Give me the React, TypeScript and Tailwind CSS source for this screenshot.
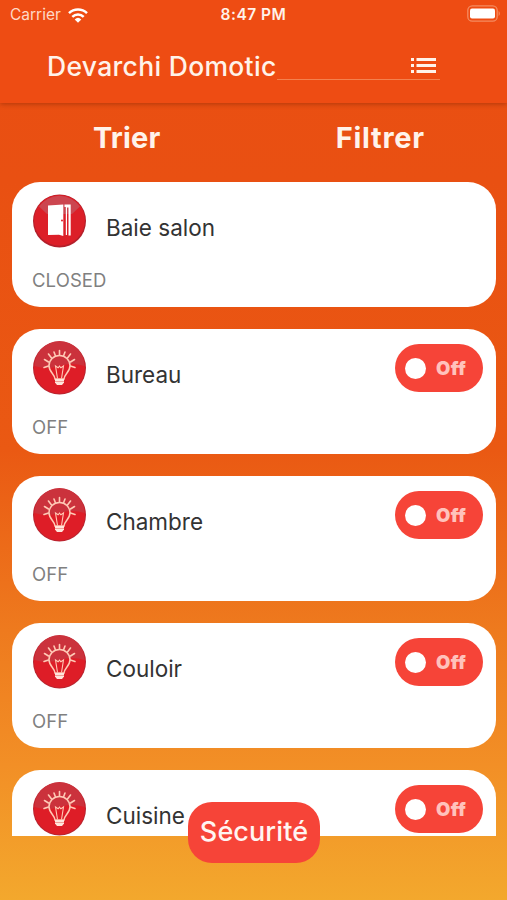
import { useState } from 'react';
import { clsx } from 'clsx';

type DeviceKind = 'door' | 'light';

interface Device {
  id: number;
  name: string;
  kind: DeviceKind;
  status: string;
}

const DEVICES: Device[] = [
  { id: 1, name: 'Baie salon', kind: 'door', status: 'CLOSED' },
  { id: 2, name: 'Bureau', kind: 'light', status: 'OFF' },
  { id: 3, name: 'Chambre', kind: 'light', status: 'OFF' },
  { id: 4, name: 'Couloir', kind: 'light', status: 'OFF' },
  { id: 5, name: 'Cuisine', kind: 'light', status: 'OFF' },
];

export default function App() {
  const [devices, setDevices] = useState<Device[]>(DEVICES);

  const toggleDevice = (id: number) => {
    setDevices((prev) =>
      prev.map((d) => (d.id === id ? { ...d, status: d.status === 'ON' ? 'OFF' : 'ON' } : d))
    );
  };

  return (
    <div className="relative flex h-[900px] w-[507px] flex-col overflow-hidden bg-linear-[180deg,#ea4e12_0%,#e95012_20%,#ea5913_50%,#ee7a1e_70%,#f28f26_85%,#f3a82d_100%] font-['Inter',sans-serif]">
      {/* App bar */}
      <header className="relative z-10 h-[103px] shrink-0 bg-[#ee4c13] text-[#fff3ea] shadow-[0_1px_5px_rgba(90,20,0,0.4)]">
        <StatusBar />
        <div className="ml-[47px] flex h-[50px] w-[393px] items-end">
          <h1 className="w-[230px] shrink-0 text-[26.5px] leading-[28px] font-medium tracking-[0.3px] whitespace-nowrap">
            Devarchi Domotic
          </h1>
          <button className="flex h-[22px] flex-1 items-start justify-end border-b border-[#f4814f] pr-1">
            <ListIcon />
          </button>
        </div>
      </header>

      {/* Sort / filter */}
      <div className="grid h-[79px] shrink-0 grid-cols-2 pt-[18px] text-[29px] leading-[33px] font-bold text-[#fff3ea]">
        <button className="h-[33px] tracking-[0.2px]">Trier</button>
        <button className="h-[33px] tracking-[0.7px]">Filtrer</button>
      </div>

      {/* Device list */}
      <main className="flex h-[654px] shrink-0 flex-col gap-[22px] overflow-y-auto pr-[11px] pl-3 [scrollbar-width:none]">
        {devices.map((device) => (
          <DeviceCard key={device.id} device={device} onToggle={() => toggleDevice(device.id)} />
        ))}
      </main>

      <button className="absolute top-[802px] left-[188px] h-[61px] w-[132px] rounded-[24px] bg-[#f64438] text-[27px] font-medium tracking-[0.1px] text-[#fff5f2]">
        Sécurité
      </button>
    </div>
  );
}

function StatusBar() {
  return (
    <div className="grid h-[30px] grid-cols-3 items-center px-[10px] text-[15.5px] leading-[30px]">
      <div className="flex items-center gap-[7px]">
        <span className="text-[#ffd9c6]">Carrier</span>
        <WifiIcon />
      </div>
      <span className="text-center font-semibold tracking-[0.5px] whitespace-nowrap">8:47 PM</span>
      <div className="flex justify-end">
        <BatteryIcon />
      </div>
    </div>
  );
}

function DeviceCard({ device, onToggle }: { device: Device; onToggle: () => void }) {
  return (
    <section className="h-[125px] shrink-0 rounded-[28px] bg-white pt-3 pr-[13px] pl-5">
      <div className="flex h-[70px] items-start">
        {device.kind === 'door' ? <DoorIcon /> : <BulbIcon />}
        <span className="mt-[19px] ml-[20px] flex-1 text-[22.5px] leading-[30px] text-[#333]">
          {device.name}
        </span>
        {device.kind === 'light' && (
          <Toggle checked={device.status === 'ON'} onChange={onToggle} />
        )}
      </div>
      <p className="mt-1 text-[18.5px] leading-6 tracking-[0.1px] text-[#808080]">{device.status}</p>
    </section>
  );
}

function Toggle({ checked, onChange }: { checked: boolean; onChange: () => void }) {
  return (
    <button
      onClick={onChange}
      className={clsx(
        'mt-[3px] flex h-[48px] w-[88px] items-center gap-[10px] rounded-full px-[10px]',
        checked ? 'flex-row-reverse bg-green-500' : 'bg-[#f64438]'
      )}
    >
      <span className="size-[21px] shrink-0 rounded-full bg-white" />
      <span className="text-[18.5px] leading-5 font-black tracking-[0.3px] text-[#ffc2bc]">
        {checked ? 'On' : 'Off'}
      </span>
    </button>
  );
}

function WifiIcon() {
  return (
    <svg width="20" height="15" viewBox="0 0 20 15" fill="none" stroke="#fff" strokeWidth="2.5">
      <path d="M1 5.2a13 13 0 0 1 18 0" />
      <path d="M4.3 8.8a8.2 8.2 0 0 1 11.4 0" />
      <path d="M10 14.8 6.7 11.4a4.8 4.8 0 0 1 6.6 0Z" fill="#fff" stroke="none" />
    </svg>
  );
}

function BatteryIcon() {
  return (
    <svg width="34" height="17" viewBox="0 0 34 17" className="-mt-[3px] -mr-[4px]">
      <rect x="0.8" y="0.8" width="29.4" height="15.4" rx="4.5" fill="none" stroke="#f58b60" strokeWidth="1.3" />
      <rect x="3" y="3.5" width="25" height="10" rx="2" fill="#fff" />
      <path d="M31.6 6v5c1.6-.7 1.6-4.3 0-5Z" fill="#f58b60" />
    </svg>
  );
}

function ListIcon() {
  return (
    <svg width="25" height="15" viewBox="0 0 25 15" fill="#fff3ea">
      <path d="M0 0h3v3H0zM5.5 0H25v3H5.5zM0 6h3v3H0zM5.5 6H25v3H5.5zM0 12h3v3H0zM5.5 12H25v3H5.5z" />
    </svg>
  );
}

function DoorIcon() {
  return (
    <svg width="54" height="54" viewBox="0 0 54 54" className="shrink-0">
      <circle cx="27.5" cy="27" r="26.5" fill="#b3202b" />
      <circle cx="27.5" cy="26.3" r="25.4" fill="#dc1f28" />
      {/* glossy highlight */}
      <path d="M7 12.5A25 25 0 0 1 48 12.5L40 20H15Z" fill="#cc4650" />
      <path d="M16 11.500 31.300 10.500V42L27 40.800 16 41Z" fill="#fff" />
      <path d="M32.500 10.500H38.700V41.500H36.500V13.500H35V41H33.800V13H32.500Z" fill="#fff" />
      <circle cx="30" cy="26.5" r="1" fill="#dc1f28" />
    </svg>
  );
}

function BulbIcon() {
  return (
    <svg width="54" height="54" viewBox="0 0 54 54" fill="none" className="shrink-0">
      <circle cx="27.5" cy="27" r="26.5" fill="#b92530" />
      <circle cx="27.5" cy="27" r="25.5" fill="#de1d27" />
      {/* glossy highlight */}
      <path d="M2.500 25A25 25 0 0 1 52.500 25Q40 21 27.500 25T2.500 25Z" fill="#cb323c" />
      {/* glass */}
      <path
        d="M23 38c0-4.500-6-7-6-13.300a10.500 10.300 0 0 1 21 0c0 6.300-6 8.800-6 13.300Z"
        stroke="#ffc9b5"
        strokeWidth="1.5"
      />
      {/* filament */}
      <path d="M25.500 37.500 23.500 25l2.600 1.800 1.400-1.600 1.400 1.600 2.600-1.800-2 12.500" stroke="#ffc9b5" strokeWidth="1.100" />
      {/* rays */}
      <path
        d="m16.500 25-4.500 1.500M16.500 21l-4-2.500M19.500 17l-3-4M23.500 15l-1.500-4M27.500 14V9.500M31.500 15l1.500-4M35.500 17l3-4M38.500 21l4-2.500M38.500 25l4.500 1.500"
        stroke="#ffc9b5"
        strokeWidth="1.600"
        strokeLinecap="round"
      />
      {/* base */}
      <path d="M23 38h9v3.500l-2 2.500h-5l-2-2.500Z" fill="#ffe5dc" />
      <path d="M23 40.500h9" stroke="#ec8079" strokeWidth="0.700" />
    </svg>
  );
}
